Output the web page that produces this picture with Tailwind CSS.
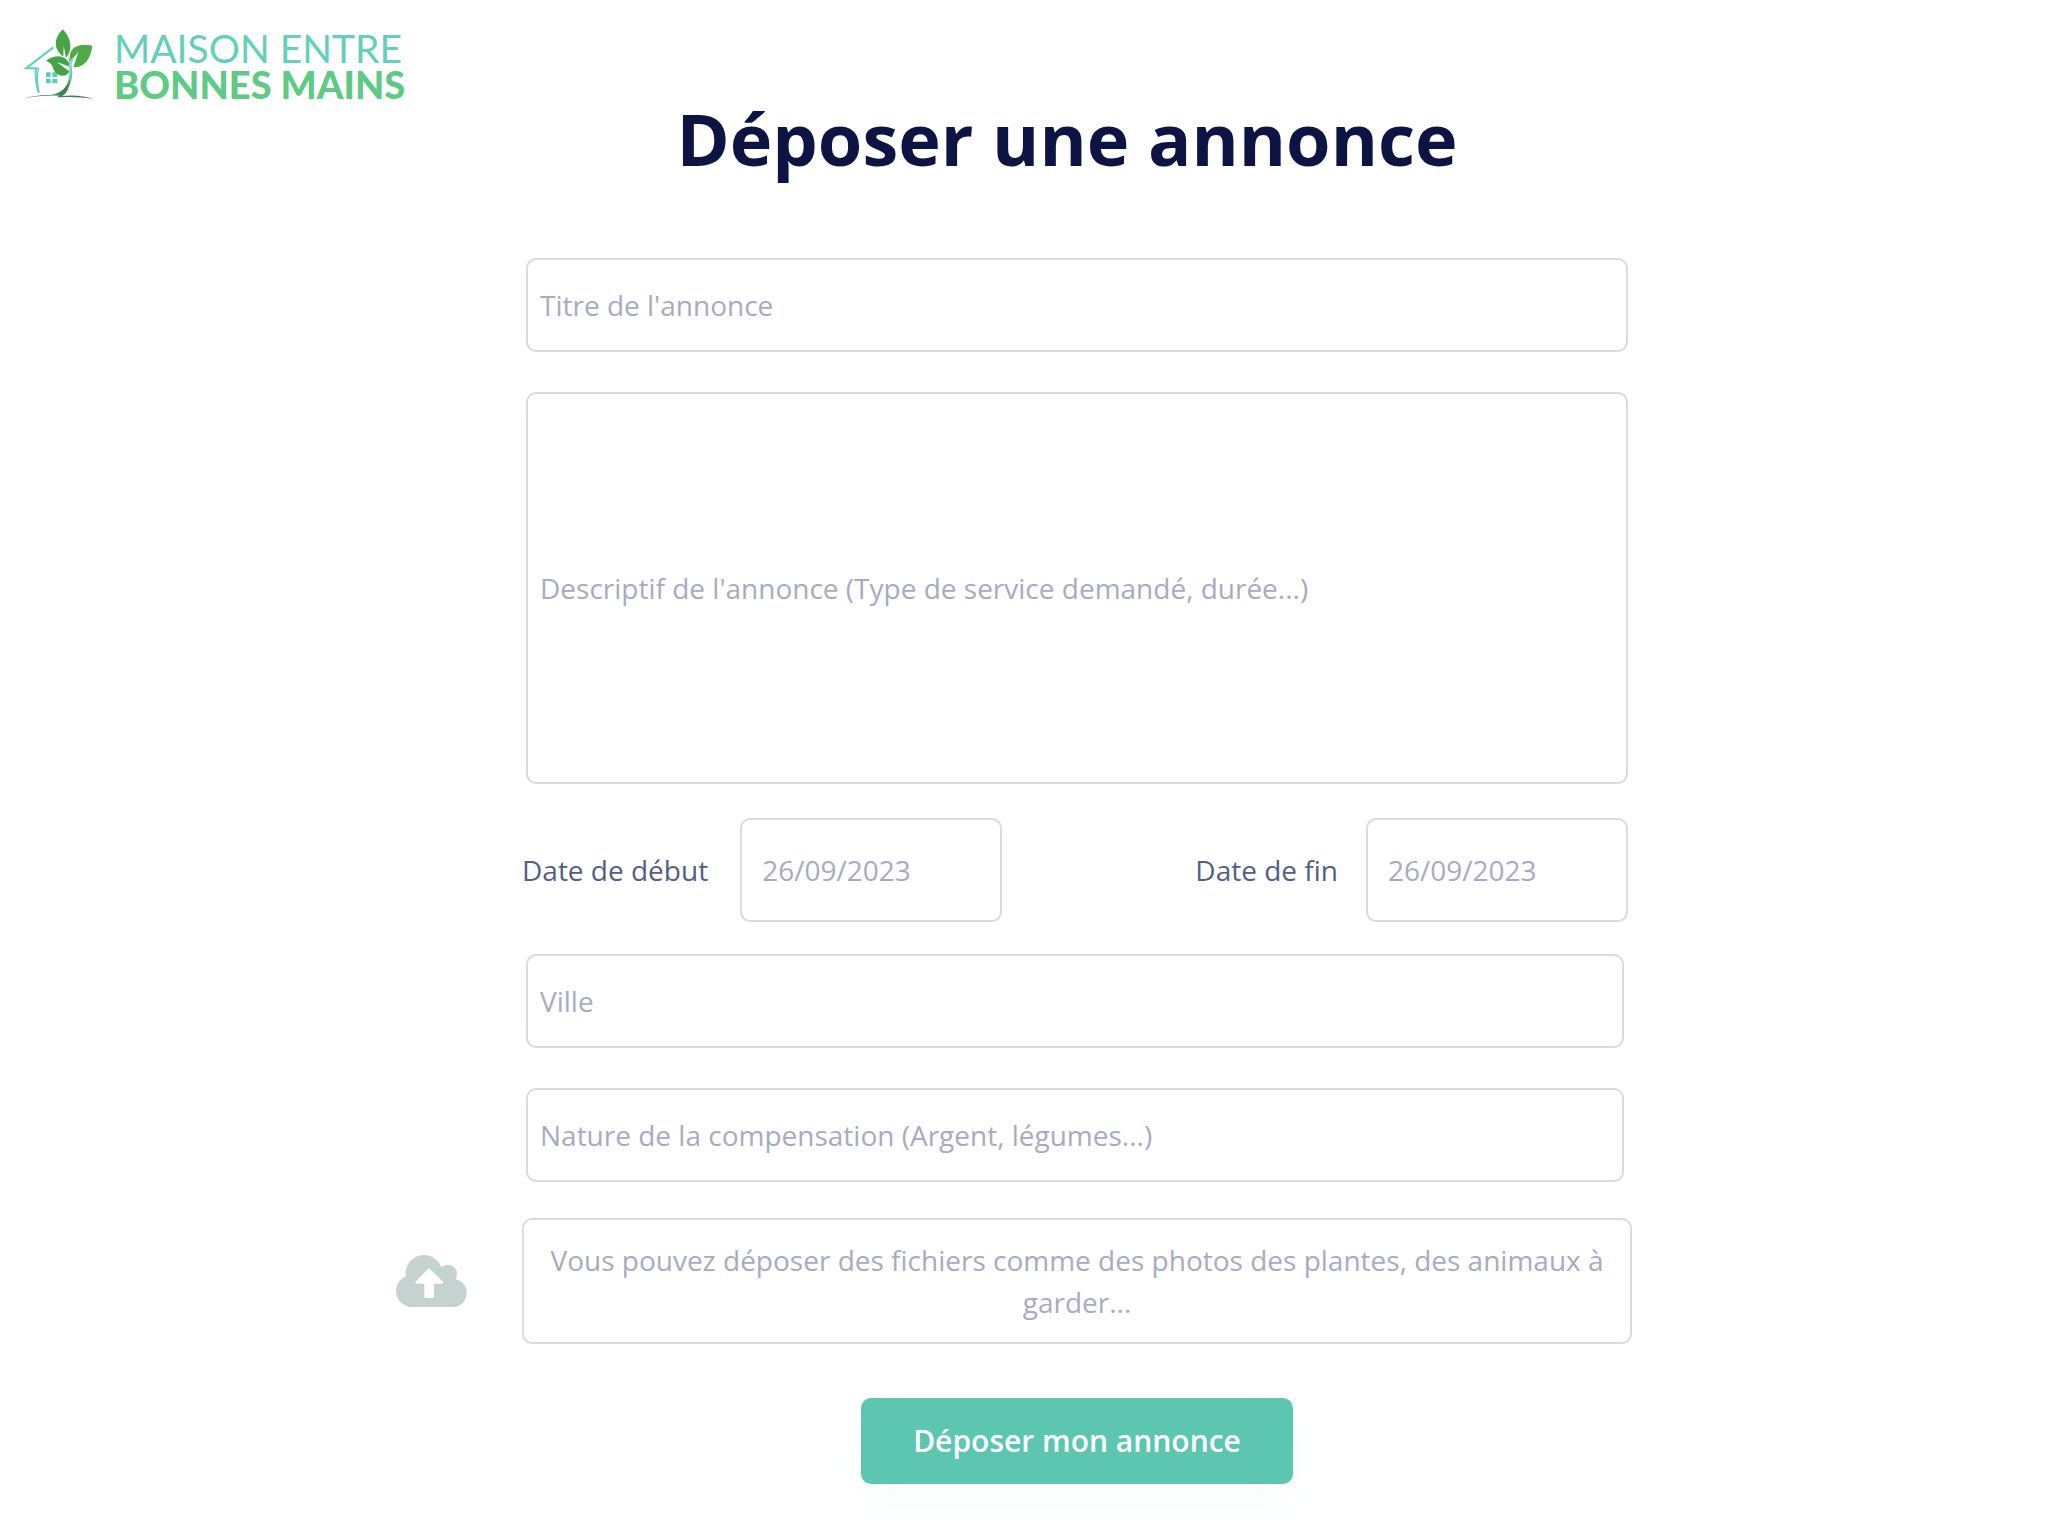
<!DOCTYPE html>
<html lang="fr">
<head>
<meta charset="utf-8">
<meta name="viewport" content="width=device-width, initial-scale=1">
<title>Déposer une annonce</title>
<script src="https://cdn.jsdelivr.net/npm/@tailwindcss/browser@4"></script>
</head>
<body class="min-h-screen bg-white font-['Open_Sans',sans-serif] text-[28px] leading-9 text-[#545e84]">
<header class="flex h-[102px] items-end pl-5">
  <a href="#" class="flex items-end gap-5" aria-label="Maison entre bonnes mains">
    <svg class="h-[74px] w-[74px]" viewBox="32 26 222 222" fill="none" aria-hidden="true">
      <path d="M132 84 50 147H80Q76 180 88 220" stroke="#63d0bd" stroke-width="6"/>
      <path d="M80 147h8q-8 30 1 73" stroke="#63d0bd" stroke-width="4"/>
      <path d="M110 159h14v14h-14zM129 159h15v14h-15zM110 178h14v14h-14zM129 178h15v14h-15z" fill="#5bcdb8"/>
      <path d="M160 30c28 28 30 62 10 86l-7-36-1 32c-30-22-30-54-2-82z" fill="#46a447"/>
      <path d="M249 79c-4 38-24 67-57 65l15-46-24 28c-10-38 22-58 66-47z" fill="#50aa49"/>
      <path d="M110 124c28-22 66-18 72 18l-40-14 38 28c-10 24-43 12-48-8-4-14-12-20-22-24z" fill="#46a447"/>
      <path d="M176 108c14 30 18 64 6 86-8 18-18 30-24 38h-12c32-30 42-66 30-124z" fill="#6bc9a5"/>
      <path d="M192 116q-12 16-10 50" stroke="#8bdcc8" stroke-width="6"/>
      <path d="M40 238q46-12 78-11 42 0 66-48-8 48-29 51 56-6 98 9-58-8-100-5h-12q16-8 13-5-60-2-114 9z" fill="#3f8350"/>
    </svg>
    <span class="flex flex-col font-[Lato] leading-9">
      <span class="text-[39px] text-[#66cfbb]">MAISON ENTRE</span>
      <span class="text-[38px] font-black text-[#5fc986]">BONNES MAINS</span>
    </span>
  </a>
</header>

<main class="pr-[26px]">
  <form class="mx-auto grid w-full max-w-[1236px] grid-cols-[72px_minmax(0,1fr)] gap-x-[54px]">
    <h1 class="col-start-2 mb-[84px] pr-5 text-center text-[72px] leading-[72px] font-bold text-[#0b1442]">Déposer une annonce</h1>

    <input type="text" aria-label="Titre de l'annonce" placeholder="Titre de l'annonce" class="col-start-2 mx-1 mb-10 h-[94px] rounded-[10px] border-2 border-[#dadae2] px-3 placeholder:text-[#a8abc0]">
    <textarea aria-label="Descriptif de l'annonce" placeholder="Descriptif de l'annonce (Type de service demandé, durée...)" class="col-start-2 mx-1 mb-[34px] h-[392px] resize-none rounded-[10px] border-2 border-[#dadae2] px-3 py-44 placeholder:text-[#a8abc0]"></textarea>

    <div class="col-start-2 mr-1 mb-8 flex items-center justify-between">
      <div class="flex items-center gap-8">
        <label for="debut">Date de début</label>
        <input id="debut" type="text" value="26/09/2023" class="h-[104px] w-[262px] rounded-[10px] border-2 border-[#dadae2] px-5 text-[#a8abc0]">
      </div>
      <div class="flex items-center gap-7">
        <label for="fin">Date de fin</label>
        <input id="fin" type="text" value="26/09/2023" class="h-[104px] w-[262px] rounded-[10px] border-2 border-[#dadae2] px-5 text-[#a8abc0]">
      </div>
    </div>

    <input type="text" aria-label="Ville" placeholder="Ville" class="col-start-2 mr-2 mb-10 ml-1 h-[94px] rounded-[10px] border-2 border-[#dadae2] px-3 placeholder:text-[#a8abc0]">
    <input type="text" aria-label="Nature de la compensation" placeholder="Nature de la compensation (Argent, légumes...)" class="col-start-2 mr-2 mb-9 ml-1 h-[94px] rounded-[10px] border-2 border-[#dadae2] px-3 placeholder:text-[#a8abc0]">

    <svg class="h-[52px] w-[71px] self-center" viewBox="48 165 213 156" aria-hidden="true">
      <g fill="#c5d2cf">
        <circle cx="96" cy="273" r="48"/>
        <circle cx="132" cy="220" r="55"/>
        <circle cx="203" cy="222" r="28"/>
        <circle cx="218" cy="279" r="42"/>
        <path d="M96 225H218V321H96z"/>
      </g>
      <path d="M147 204 190 247Q189 251 185 251H162V290Q162 294 158 294H137Q133 294 133 290V251H109Q105 251 105 247z" fill="#fff"/>
    </svg>
    <label class="relative cursor-pointer rounded-[10px] border-2 border-[#dadae2] px-5 py-[19px] text-center leading-[42px] text-[#a8abc0]">
      Vous pouvez déposer des fichiers comme des photos des plantes, des animaux à garder...
      <input type="file" multiple class="sr-only">
    </label>

    <button type="submit" class="col-start-2 mt-[54px] h-[86px] w-[432px] justify-self-center rounded-[10px] bg-[#5dc6b0] text-[30px] font-semibold text-white shadow-[0_20px_40px_rgba(93,198,176,0.04)]">Déposer mon annonce</button>
  </form>
</main>
</body>
</html>
